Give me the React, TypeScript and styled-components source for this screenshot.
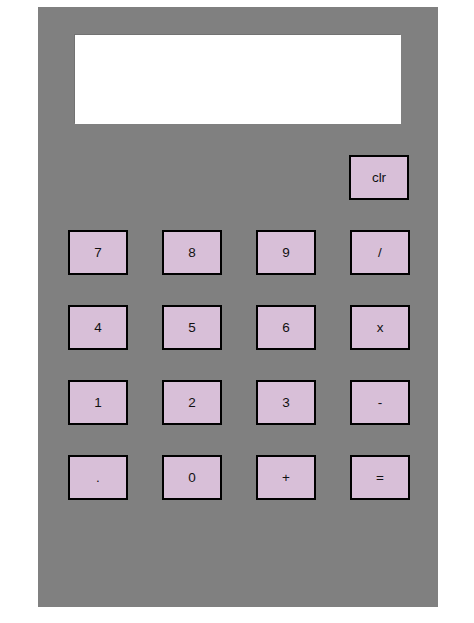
import React from "react";
import styled, { createGlobalStyle } from "styled-components";

const Global = createGlobalStyle`
  html, body { margin: 0; padding: 0; background: #ffffff; }
  body { font-family: "Liberation Sans", Arial, sans-serif; }
`;

const Page = styled.div`
  padding: 7px 0 0 38px;
`;

const Panel = styled.div`
  width: 400px;
  height: 600px;
  background: #808080;
  box-sizing: border-box;
  padding-top: 28px;
  display: flex;
  flex-direction: column;
`;

const Display = styled.div`
  width: 326px;
  height: 89px;
  margin-left: 37px;
  background: #ffffff;
  box-shadow: -1px -1px 0 #727272;
`;

const TopRow = styled.div`
  display: flex;
  justify-content: flex-end;
  padding-right: 29px;
  margin-top: 31px;
`;

const Keys = styled.div`
  display: grid;
  grid-template-columns: repeat(4, 60px);
  grid-auto-rows: 45px;
  column-gap: 34px;
  row-gap: 30px;
  padding-left: 30px;
  margin-top: 30px;
`;

const Key = styled.button`
  width: 60px;
  height: 45px;
  box-sizing: border-box;
  margin: 0;
  padding: 0;
  background: #d8bfd8;
  border: 2px solid #000000;
  border-radius: 0;
  color: #111111;
  font-family: "Liberation Sans", Arial, sans-serif;
  font-size: 13.5px;
  display: flex;
  align-items: center;
  justify-content: center;
`;

const rows = [
  ["7", "8", "9", "/"],
  ["4", "5", "6", "x"],
  ["1", "2", "3", "-"],
  [".", "0", "+", "="],
];

export default function App() {
  return (
    <>
      <Global />
      <Page>
        <Panel>
          <Display />
          <TopRow>
            <Key>clr</Key>
          </TopRow>
          <Keys>
            {rows.flat().map((k) => (
              <Key key={k}>{k}</Key>
            ))}
          </Keys>
        </Panel>
      </Page>
    </>
  );
}
